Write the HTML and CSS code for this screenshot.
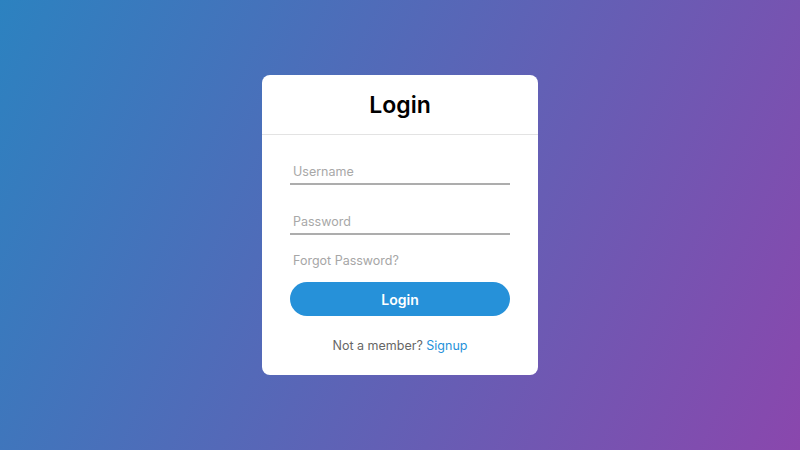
FILE: index.html
```html
<!DOCTYPE html>
<html lang="en">
<head>
  <meta charset="UTF-8" />
  <title>Login</title>
  <link rel="stylesheet" href="styles.css">
</head>
<body>

  <div class="center">
    <h1>Login</h1>
    <form>
      <div class="txt-field">
        <input type="text" placeholder="Username">
      </div>
      <div class="txt-field">
        <input type="password" placeholder="Password">
      </div>
      <div class="pass">Forgot Password?</div>
      <button type="button" class="login-btn">Login</button>
      <div class="signup-link">Not a member? <a href="#">Signup</a></div>
    </form>
  </div>

</body>
</html>
```

FILE: styles.css
```css
* { box-sizing: border-box; margin: 0; padding: 0; }
body {
  font-family: "Inter", "Noto Sans", sans-serif;
  height: 100vh;
  overflow: hidden;
  background: linear-gradient(115deg, #2c82c0, #8a47ad);
  display: flex;
  justify-content: center;
  align-items: center;
}

.center {
  width: 276px;
  background: #fff;
  border-radius: 8px;
}
.center h1 {
  text-align: center;
  font-size: 23px;
  font-weight: 600;
  color: #000;
  height: 60px;
  line-height: 60px;
  border-bottom: 1px solid #e3e3e3;
}

.center form {
  display: flex;
  flex-direction: column;
  padding: 6px 28px 21px;
}

.txt-field {
  border-bottom: 2px solid #adadad;
  margin: 10px 0 6px;
}
.txt-field input {
  width: 100%;
  height: 32px;
  padding: 8px 3px 0;
  font-family: inherit;
  font-size: 12.5px;
  border: none;
  outline: none;
  background: none;
  color: #333;
}
.txt-field input::placeholder { color: #a8a8a8; }

.pass {
  margin: 12px 0 13px 3px;
  line-height: 16px;
  font-size: 12.5px;
  color: #a6a6a6;
}

.login-btn {
  width: 100%;
  height: 34px;
  border: none;
  border-radius: 17px;
  background: #2691d9;
  color: #fff;
  font-family: inherit;
  font-size: 14px;
  font-weight: 600;
  cursor: pointer;
}

.signup-link {
  text-align: center;
  line-height: 16px;
  font-size: 12.5px;
  color: #666;
  margin-top: 22px;
}
.signup-link a { color: #2691d9; text-decoration: none; }
```
